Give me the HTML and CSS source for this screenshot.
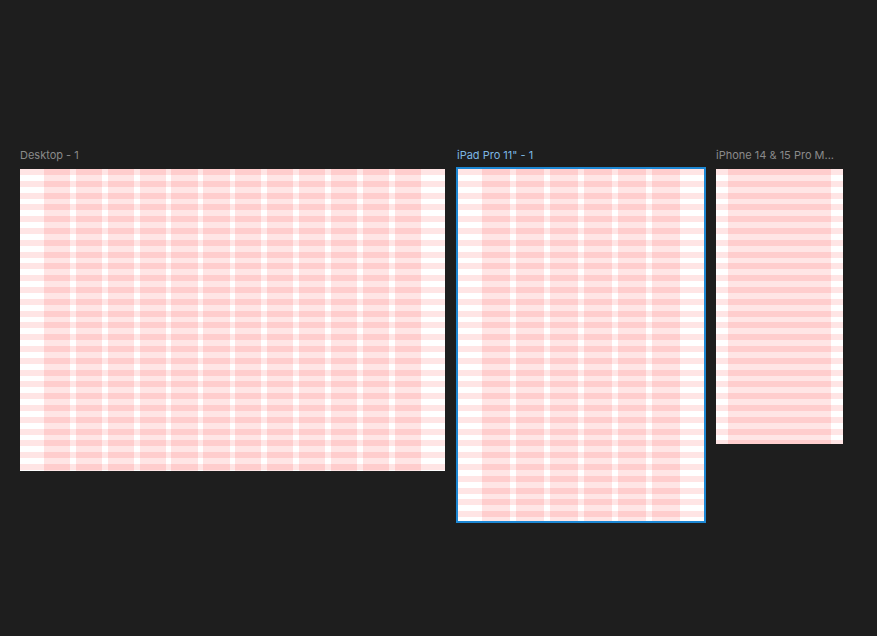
FILE: index.html
```html
<!DOCTYPE html>
<html>
<head>
<meta charset="utf-8">
<link rel="stylesheet" href="styles.css">
</head>
<body>
<div class="canvas">
  <div class="board desktop">
    <div class="label">Desktop - 1</div>
    <div class="frame">
      <div class="rows"></div>
      <div class="cols"><i></i><i></i><i></i><i></i><i></i><i></i><i></i><i></i><i></i><i></i><i></i><i></i></div>
    </div>
  </div>
  <div class="board ipad selected">
    <div class="label">iPad Pro 11" - 1</div>
    <div class="frame">
      <div class="rows"></div>
      <div class="cols"><i></i><i></i><i></i><i></i><i></i><i></i></div>
    </div>
  </div>
  <div class="board iphone">
    <div class="label">iPhone 14 &amp; 15 Pro M...</div>
    <div class="frame">
      <div class="rows"></div>
      <div class="cols"><i></i></div>
    </div>
  </div>
</div>
</body>
</html>
```

FILE: styles.css
```css
html, body {
  margin: 0;
  padding: 0;
  background: #1e1e1e;
  width: 877px;
  height: 636px;
  overflow: hidden;
  font-family: Inter, "Noto Sans", sans-serif;
}

.canvas {
  display: flex;
  align-items: flex-start;
  padding: 148px 0 0 20px;
}

.board {
  display: flex;
  flex-direction: column;
}

.label {
  font-size: 11px;
  line-height: 14px;
  height: 14px;
  color: #8a8a8a;
  margin-bottom: 7px;
  white-space: nowrap;
}

.frame {
  display: grid;
  background: #ffffff;
  box-sizing: border-box;
}

.frame > * {
  grid-area: 1 / 1;
}

.rows {
  background: repeating-linear-gradient(
    to bottom,
    rgba(255, 0, 0, 0.1) 0,
    rgba(255, 0, 0, 0.1) 6px,
    transparent 6px,
    transparent 11.8px
  );
}

.cols {
  display: flex;
  gap: 5.9px;
}

.cols i {
  flex: 1;
  background: rgba(255, 0, 0, 0.1);
}

/* Desktop */
.desktop .frame {
  width: 425px;
  height: 302px;
}
.desktop .cols {
  padding: 0 23.6px;
}

/* iPad */
.ipad {
  margin-left: 11px;
}
.ipad .label {
  color: #7db7e3;
  padding-left: 1px;
}
.ipad .frame {
  width: 250px;
  height: 356px;
  border: 2px solid #1d87d3;
  margin-top: -2px;
}
.ipad .cols {
  padding: 0 23.6px;
}

/* iPhone */
.iphone {
  margin-left: 10px;
}
.iphone .frame {
  width: 127px;
  height: 275px;
}
.iphone .cols {
  padding: 0 11.8px;
}
```
